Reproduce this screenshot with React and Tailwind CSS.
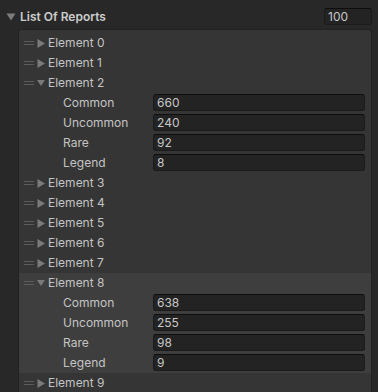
import React from 'react';

const ELEMENTS = [
  { name: 'Element 0' },
  { name: 'Element 1' },
  { name: 'Element 2', open: true, values: { Common: 660, Uncommon: 240, Rare: 92, Legend: 8 } },
  { name: 'Element 3' },
  { name: 'Element 4' },
  { name: 'Element 5' },
  { name: 'Element 6' },
  { name: 'Element 7' },
  { name: 'Element 8', open: true, selected: true, values: { Common: 638, Uncommon: 255, Rare: 98, Legend: 9 } },
  { name: 'Element 9' },
];

function Handle() {
  return (
    <div className="w-[10px] flex flex-col gap-[2px] ml-[5px]">
      <div className="h-px bg-[#5c5c5c]" />
      <div className="h-px bg-[#5c5c5c]" />
    </div>
  );
}

function Arrow({ open, color = '#7a7a7a', big }) {
  if (open) {
    return big ? (
      <svg width="10" height="8" viewBox="0 0 10 8" className="block">
        <path d="M0.5 0.5 L9.5 0.5 L5 7.5 Z" fill={color} />
      </svg>
    ) : (
      <svg width="9" height="8" viewBox="0 0 9 8" className="block">
        <path d="M0 0.5 L9 0.5 L4.5 7.5 Z" fill={color} />
      </svg>
    );
  }
  return (
    <svg width="8" height="9" viewBox="0 0 8 9" className="block">
      <path d="M0.5 0 L8 4.5 L0.5 9 Z" fill={color} />
    </svg>
  );
}

function Field({ value }) {
  return (
    <div className="mt-px h-[17px] flex-1 mr-[6px] rounded-[3px] bg-[#232323] border border-[#1b1b1b] border-t-[#0e0e0e] px-[3px] flex items-center text-[#c8c8c8]">
      {value}
    </div>
  );
}

function Element({ el }) {
  return (
    <div className={el.selected ? 'bg-[#3e3e3e]' : ''}>
      <div className="h-5 flex items-center">
        <Handle />
        <div className="w-[8px] ml-[3px] flex justify-center">
          <Arrow open={el.open} />
        </div>
        <span className="ml-[3px]">{el.name}</span>
      </div>
      {el.open &&
        Object.entries(el.values).map(([k, v]) => (
          <div key={k} className="h-5 flex items-start">
            <span className="w-[134px] pl-[44px] leading-5">{k}</span>
            <Field value={v} />
          </div>
        ))}
    </div>
  );
}

export default function App() {
  return (
    <div
      className="w-[378px] h-[392px] overflow-hidden bg-[#282828] text-[12px] text-[#c4c4c4]"
      style={{ fontFamily: 'Inter, "Noto Sans", sans-serif' }}
    >
      <div className="h-[29px] flex items-center pl-[6px] pr-[6px] pt-[4px]">
        <Arrow open big color="#7c7c7c" />
        <span className="ml-[4px] font-semibold text-[#cccccc]">List Of Reports</span>
        <div className="ml-auto w-[48px] h-[17px] rounded-[3px] bg-[#232323] border border-[#1b1b1b] border-t-[#0e0e0e] px-[3px] flex items-center text-[#c8c8c8]">
          100
        </div>
      </div>
      <div className="ml-[18px] mr-[6px] h-[363px] bg-[#353535] border border-b-0 border-[#222222] rounded-t-[3px] pt-[3px]">
        {ELEMENTS.map((el) => (
          <Element key={el.name} el={el} />
        ))}
      </div>
    </div>
  );
}
